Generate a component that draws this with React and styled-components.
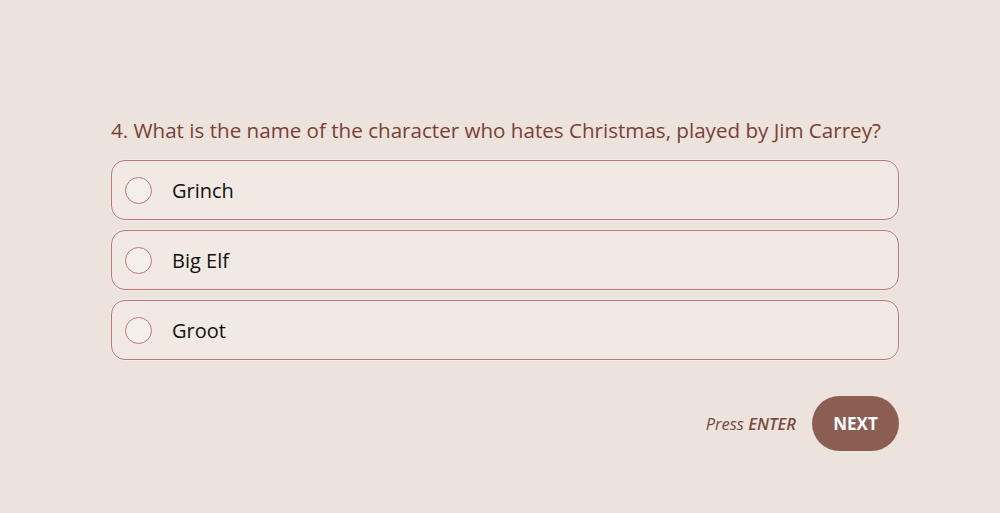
import styled, { createGlobalStyle } from "styled-components";

const GlobalStyle = createGlobalStyle`
    html, body {
        margin: 0;
        padding: 0;
        background: #ece3dd;
        font-family: "Open Sans", "Noto Sans", sans-serif;
    }
`;

const options = ["Grinch", "Big Elf", "Groot"];

export default function App() {
    return (
        <Page>
            <GlobalStyle />
            <Quiz>
                <Question>4. What is the name of the character who hates Christmas, played by Jim Carrey?</Question>
                <OptionList>
                    {options.map(o => (
                        <Option key={o}>
                            <Radio />
                            <span>{o}</span>
                        </Option>
                    ))}
                </OptionList>
                <Footer>
                    <Hint>Press <b>ENTER</b></Hint>
                    <NextButton>NEXT</NextButton>
                </Footer>
            </Quiz>
        </Page>
    );
}

const Page = styled.div`
    width: 1000px;
    height: 513px;
    padding-top: 115px;
    box-sizing: border-box;
`;

const Quiz = styled.div`
    width: 788px;
    margin-left: 111px;
`;

const Question = styled.div`
    color: #7a4036;
    font-size: 20.6px;
    line-height: 30px;
    margin-bottom: 15px;
`;

const OptionList = styled.div`
    display: flex;
    flex-direction: column;
    gap: 10px;
`;

const Option = styled.div`
    display: flex;
    align-items: center;
    height: 60px;
    box-sizing: border-box;
    padding-left: 13px;
    border: 1px solid #bf747c;
    border-radius: 14px;
    background: #f1eae4;
    box-shadow: 0 0 0 1px rgba(255, 255, 255, 0.35);
    color: #111;
    font-size: 20px;

    span {
        margin-left: 20px;
    }
`;

const Radio = styled.div`
    width: 27px;
    height: 27px;
    box-sizing: border-box;
    border: 1.5px solid #bf747c;
    border-radius: 50%;
    background: #f4efeb;
`;

const Footer = styled.div`
    display: flex;
    justify-content: flex-end;
    align-items: center;
    gap: 16px;
    margin-top: 36px;
`;

const Hint = styled.div`
    font-style: italic;
    font-size: 16.5px;
    color: #7a4a3e;

    b {
        font-weight: 600;
    }
`;

const NextButton = styled.button`
    width: 87px;
    height: 55px;
    border: none;
    border-radius: 28px;
    background: #8c5e51;
    color: #fff;
    font-family: "Open Sans", sans-serif;
    font-weight: 700;
    font-size: 17px;
    cursor: pointer;
`;
